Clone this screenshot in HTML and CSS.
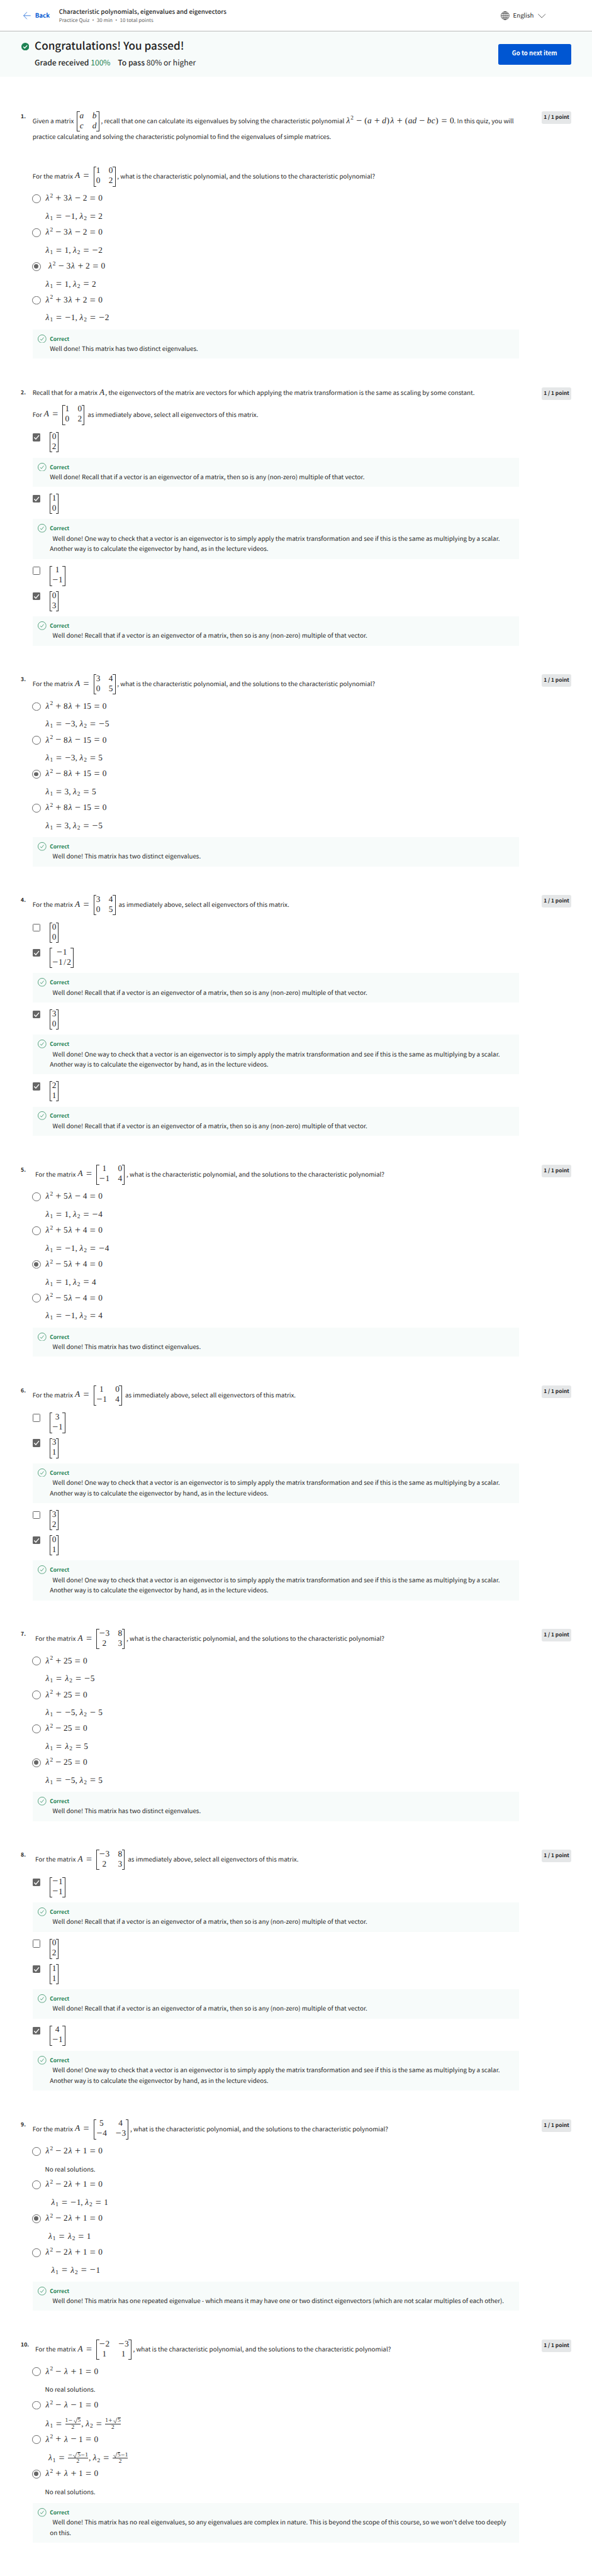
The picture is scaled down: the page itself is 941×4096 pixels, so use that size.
FILE: index.html
```
<!DOCTYPE html>
<html lang="en">
<head>
<meta charset="utf-8">
<title>Characteristic polynomials, eigenvalues and eigenvectors</title>
<link rel="stylesheet" href="styles.css">
</head>
<body>
<svg width="0" height="0" class="defs">
  <symbol id="ok" viewBox="0 0 20 20"><circle cx="10" cy="10" r="9.3" fill="none" stroke="#1f8354" stroke-width="1.1"/><path d="M5.8 10.4l2.7 2.9 5.3-6.6" fill="none" stroke="#1f8354" stroke-width="1.1"/></symbol>
  <symbol id="tick" viewBox="0 0 18 18"><path d="M3.4 9.4l3.8 4L14.6 4.6" fill="none" stroke="#fff" stroke-width="2"/></symbol>
  <symbol id="rad" viewBox="0 0 12 18"><path d="M1.2 10.4L3 9.2l3.6 7.6L11.8.6" fill="none" stroke="#1f1f1f" stroke-width="1.1"/></symbol>
</svg>

<header class="topbar">
  <a class="back"><svg class="arrow" viewBox="0 0 16 16"><path d="M8 .4L.8 8 8 15.6M.8 8H16" fill="none" stroke="#0056d2" stroke-width="1"/></svg><span>Back</span></a>
  <div class="heading">
    <div class="title">Characteristic polynomials, eigenvalues and eigenvectors</div>
    <div class="meta">Practice Quiz • 30 min • 10 total points</div>
  </div>
  <div class="lang">
    <svg class="globe" viewBox="0 0 20 20"><g fill="none" stroke="#333" stroke-width="1.1"><circle cx="10" cy="10" r="9.3"/><ellipse cx="10" cy="10" rx="4.6" ry="9.3"/><path d="M.7 10h18.6M10 .7v18.6M2.4 5.2h15.2M2.4 14.8h15.2"/></g></svg>
    <span>English</span>
    <svg class="chev" viewBox="0 0 18 10"><path d="M.6.6L9 9 17.4.6" fill="none" stroke="#333" stroke-width="1.1"/></svg>
  </div>
</header>

<section class="banner">
  <svg class="passed" viewBox="0 0 18 18"><circle cx="9" cy="9" r="9" fill="#1f8354"/><path d="M4.6 9.2l3 3 5.8-6" fill="none" stroke="#fff" stroke-width="2"/></svg>
  <div class="result">
    <h1>Congratulations! You passed!</h1>
    <div class="grade"><b>Grade received</b> <span class="pct">100%</span><b class="pass">To pass</b> 80% or higher</div>
  </div>
  <button class="next">Go to next item</button>
</section>

<main>

<section class="q">
  <div class="num">1.</div>
  <div class="body">
    <p class="mline">Given a matrix <span class="mx c2"><span><var>a</var></span><span><var>b</var></span><span><var>c</var></span><span><var>d</var></span></span>, recall that one can calculate its eigenvalues by solving the characteristic polynomial <span class="m"><i>λ</i><sup>2</sup><span class="op">−</span><span class="par">(</span><var>a</var><span class="op">+</span><var>d</var><span class="par">)</span><i>λ</i><span class="op">+</span><span class="par">(</span><var>ad</var><span class="op">−</span><var>bc</var><span class="par">)</span><span class="eq">=</span>0</span>. In this quiz, you will</p>
    <p class="line">practice calculating and solving the characteristic polynomial to find the eigenvalues of simple matrices.</p>
    <p class="mline again">For the matrix <span class="m"><i class="A">A</i><span class="eq">=</span></span><span class="mx c2"><span>1</span><span>0</span><span>0</span><span>2</span></span>, what is the characteristic polynomial, and the solutions to the characteristic polynomial?</p>
    <div class="opts">
      <div class="radio"><span class="dot"></span><div class="m"><div class="r1"><i>λ</i><sup>2</sup><span class="op">+</span>3<i>λ</i><span class="op">−</span>2<span class="eq">=</span>0</div><div class="r2"><i>λ</i><sub>1</sub><span class="eq">=</span><span class="neg">−</span>1<span class="cm">,</span><i>λ</i><sub>2</sub><span class="eq">=</span>2</div></div></div>
      <div class="radio"><span class="dot"></span><div class="m"><div class="r1"><i>λ</i><sup>2</sup><span class="op">−</span>3<i>λ</i><span class="op">−</span>2<span class="eq">=</span>0</div><div class="r2"><i>λ</i><sub>1</sub><span class="eq">=</span>1<span class="cm">,</span><i>λ</i><sub>2</sub><span class="eq">=</span><span class="neg">−</span>2</div></div></div>
      <div class="radio"><span class="dot on"></span><div class="m"><div class="r1 in"><i>λ</i><sup>2</sup><span class="op">−</span>3<i>λ</i><span class="op">+</span>2<span class="eq">=</span>0</div><div class="r2"><i>λ</i><sub>1</sub><span class="eq">=</span>1<span class="cm">,</span><i>λ</i><sub>2</sub><span class="eq">=</span>2</div></div></div>
      <div class="radio"><span class="dot"></span><div class="m"><div class="r1"><i>λ</i><sup>2</sup><span class="op">+</span>3<i>λ</i><span class="op">+</span>2<span class="eq">=</span>0</div><div class="r2"><i>λ</i><sub>1</sub><span class="eq">=</span><span class="neg">−</span>1<span class="cm">,</span><i>λ</i><sub>2</sub><span class="eq">=</span><span class="neg">−</span>2</div></div></div>
      <div class="fb"><svg><use href="#ok"/></svg><div><h4>Correct</h4><p>Well done! This matrix has two distinct eigenvalues.</p></div></div>
    </div>
  </div>
  <div class="pts">1 / 1 point</div>
</section>

<section class="q">
  <div class="num">2.</div>
  <div class="body">
    <p class="line first">Recall that for a matrix <span class="m"><i class="A">A</i></span>, the eigenvectors of the matrix are vectors for which applying the matrix transformation is the same as scaling by some constant.</p>
    <p class="mline second">For <span class="m"><i class="A">A</i><span class="eq">=</span></span><span class="mx c2"><span>1</span><span>0</span><span>0</span><span>2</span></span> as immediately above, select all eigenvectors of this matrix.</p>
    <div class="opts">
      <div class="check"><span class="box on"><svg><use href="#tick"/></svg></span><span class="mx"><span>0</span><span>2</span></span></div>
      <div class="fb"><svg><use href="#ok"/></svg><div><h4>Correct</h4><p>Well done! Recall that if a vector is an eigenvector of a matrix, then so is any (non-zero) multiple of that vector.</p></div></div>
      <div class="check"><span class="box on"><svg><use href="#tick"/></svg></span><span class="mx"><span>1</span><span>0</span></span></div>
      <div class="fb"><svg><use href="#ok"/></svg><div><h4>Correct</h4><p class="in">Well done! One way to check that a vector is an eigenvector is to simply apply the matrix transformation and see if this is the same as multiplying by a scalar.<br>Another way is to calculate the eigenvector by hand, as in the lecture videos.</p></div></div>
      <div class="check"><span class="box"></span><span class="mx"><span>1</span><span><span class="neg">−</span>1</span></span></div>
      <div class="check"><span class="box on"><svg><use href="#tick"/></svg></span><span class="mx"><span>0</span><span>3</span></span></div>
      <div class="fb"><svg><use href="#ok"/></svg><div><h4>Correct</h4><p class="in">Well done! Recall that if a vector is an eigenvector of a matrix, then so is any (non-zero) multiple of that vector.</p></div></div>
    </div>
  </div>
  <div class="pts">1 / 1 point</div>
</section>

<section class="q">
  <div class="num">3.</div>
  <div class="body">
    <p class="mline">For the matrix <span class="m"><i class="A">A</i><span class="eq">=</span></span><span class="mx c2"><span>3</span><span>4</span><span>0</span><span>5</span></span>, what is the characteristic polynomial, and the solutions to the characteristic polynomial?</p>
    <div class="opts">
      <div class="radio"><span class="dot"></span><div class="m"><div class="r1"><i>λ</i><sup>2</sup><span class="op">+</span>8<i>λ</i><span class="op">+</span>15<span class="eq">=</span>0</div><div class="r2"><i>λ</i><sub>1</sub><span class="eq">=</span><span class="neg">−</span>3<span class="cm">,</span><i>λ</i><sub>2</sub><span class="eq">=</span><span class="neg">−</span>5</div></div></div>
      <div class="radio"><span class="dot"></span><div class="m"><div class="r1"><i>λ</i><sup>2</sup><span class="op">−</span>8<i>λ</i><span class="op">−</span>15<span class="eq">=</span>0</div><div class="r2"><i>λ</i><sub>1</sub><span class="eq">=</span><span class="neg">−</span>3<span class="cm">,</span><i>λ</i><sub>2</sub><span class="eq">=</span>5</div></div></div>
      <div class="radio"><span class="dot on"></span><div class="m"><div class="r1"><i>λ</i><sup>2</sup><span class="op">−</span>8<i>λ</i><span class="op">+</span>15<span class="eq">=</span>0</div><div class="r2"><i>λ</i><sub>1</sub><span class="eq">=</span>3<span class="cm">,</span><i>λ</i><sub>2</sub><span class="eq">=</span>5</div></div></div>
      <div class="radio"><span class="dot"></span><div class="m"><div class="r1"><i>λ</i><sup>2</sup><span class="op">+</span>8<i>λ</i><span class="op">−</span>15<span class="eq">=</span>0</div><div class="r2"><i>λ</i><sub>1</sub><span class="eq">=</span>3<span class="cm">,</span><i>λ</i><sub>2</sub><span class="eq">=</span><span class="neg">−</span>5</div></div></div>
      <div class="fb"><svg><use href="#ok"/></svg><div><h4>Correct</h4><p class="in">Well done! This matrix has two distinct eigenvalues.</p></div></div>
    </div>
  </div>
  <div class="pts">1 / 1 point</div>
</section>

<section class="q">
  <div class="num">4.</div>
  <div class="body">
    <p class="mline">For the matrix <span class="m"><i class="A">A</i><span class="eq">=</span></span><span class="mx c2"><span>3</span><span>4</span><span>0</span><span>5</span></span> as immediately above, select all eigenvectors of this matrix.</p>
    <div class="opts">
      <div class="check"><span class="box"></span><span class="mx"><span>0</span><span>0</span></span></div>
      <div class="check"><span class="box on"><svg><use href="#tick"/></svg></span><span class="mx"><span><span class="neg">−</span>1</span><span><span class="neg">−</span>1<span class="sl">/</span>2</span></span></div>
      <div class="fb"><svg><use href="#ok"/></svg><div><h4>Correct</h4><p class="in">Well done! Recall that if a vector is an eigenvector of a matrix, then so is any (non-zero) multiple of that vector.</p></div></div>
      <div class="check"><span class="box on"><svg><use href="#tick"/></svg></span><span class="mx"><span>3</span><span>0</span></span></div>
      <div class="fb"><svg><use href="#ok"/></svg><div><h4>Correct</h4><p class="in">Well done! One way to check that a vector is an eigenvector is to simply apply the matrix transformation and see if this is the same as multiplying by a scalar.<br>Another way is to calculate the eigenvector by hand, as in the lecture videos.</p></div></div>
      <div class="check"><span class="box on"><svg><use href="#tick"/></svg></span><span class="mx"><span>2</span><span>1</span></span></div>
      <div class="fb"><svg><use href="#ok"/></svg><div><h4>Correct</h4><p class="in">Well done! Recall that if a vector is an eigenvector of a matrix, then so is any (non-zero) multiple of that vector.</p></div></div>
    </div>
  </div>
  <div class="pts">1 / 1 point</div>
</section>

<section class="q">
  <div class="num">5.</div>
  <div class="body">
    <p class="mline in">For the matrix <span class="m"><i class="A">A</i><span class="eq">=</span></span><span class="mx c2"><span>1</span><span>0</span><span><span class="neg">−</span>1</span><span>4</span></span>, what is the characteristic polynomial, and the solutions to the characteristic polynomial?</p>
    <div class="opts">
      <div class="radio"><span class="dot"></span><div class="m"><div class="r1"><i>λ</i><sup>2</sup><span class="op">+</span>5<i>λ</i><span class="op">−</span>4<span class="eq">=</span>0</div><div class="r2"><i>λ</i><sub>1</sub><span class="eq">=</span>1<span class="cm">,</span><i>λ</i><sub>2</sub><span class="eq">=</span><span class="neg">−</span>4</div></div></div>
      <div class="radio"><span class="dot"></span><div class="m"><div class="r1"><i>λ</i><sup>2</sup><span class="op">+</span>5<i>λ</i><span class="op">+</span>4<span class="eq">=</span>0</div><div class="r2"><i>λ</i><sub>1</sub><span class="eq">=</span><span class="neg">−</span>1<span class="cm">,</span><i>λ</i><sub>2</sub><span class="eq">=</span><span class="neg">−</span>4</div></div></div>
      <div class="radio"><span class="dot on"></span><div class="m"><div class="r1"><i>λ</i><sup>2</sup><span class="op">−</span>5<i>λ</i><span class="op">+</span>4<span class="eq">=</span>0</div><div class="r2"><i>λ</i><sub>1</sub><span class="eq">=</span>1<span class="cm">,</span><i>λ</i><sub>2</sub><span class="eq">=</span>4</div></div></div>
      <div class="radio"><span class="dot"></span><div class="m"><div class="r1"><i>λ</i><sup>2</sup><span class="op">−</span>5<i>λ</i><span class="op">−</span>4<span class="eq">=</span>0</div><div class="r2"><i>λ</i><sub>1</sub><span class="eq">=</span><span class="neg">−</span>1<span class="cm">,</span><i>λ</i><sub>2</sub><span class="eq">=</span>4</div></div></div>
      <div class="fb"><svg><use href="#ok"/></svg><div><h4>Correct</h4><p class="in">Well done! This matrix has two distinct eigenvalues.</p></div></div>
    </div>
  </div>
  <div class="pts">1 / 1 point</div>
</section>

<section class="q">
  <div class="num">6.</div>
  <div class="body">
    <p class="mline">For the matrix <span class="m"><i class="A">A</i><span class="eq">=</span></span><span class="mx c2"><span>1</span><span>0</span><span><span class="neg">−</span>1</span><span>4</span></span> as immediately above, select all eigenvectors of this matrix.</p>
    <div class="opts">
      <div class="check"><span class="box"></span><span class="mx"><span>3</span><span><span class="neg">−</span>1</span></span></div>
      <div class="check"><span class="box on"><svg><use href="#tick"/></svg></span><span class="mx"><span>3</span><span>1</span></span></div>
      <div class="fb"><svg><use href="#ok"/></svg><div><h4>Correct</h4><p class="in">Well done! One way to check that a vector is an eigenvector is to simply apply the matrix transformation and see if this is the same as multiplying by a scalar.<br>Another way is to calculate the eigenvector by hand, as in the lecture videos.</p></div></div>
      <div class="check"><span class="box"></span><span class="mx"><span>3</span><span>2</span></span></div>
      <div class="check"><span class="box on"><svg><use href="#tick"/></svg></span><span class="mx"><span>0</span><span>1</span></span></div>
      <div class="fb"><svg><use href="#ok"/></svg><div><h4>Correct</h4><p class="in">Well done! One way to check that a vector is an eigenvector is to simply apply the matrix transformation and see if this is the same as multiplying by a scalar.<br>Another way is to calculate the eigenvector by hand, as in the lecture videos.</p></div></div>
    </div>
  </div>
  <div class="pts">1 / 1 point</div>
</section>

<section class="q">
  <div class="num">7.</div>
  <div class="body">
    <p class="mline in">For the matrix <span class="m"><i class="A">A</i><span class="eq">=</span></span><span class="mx c2"><span><span class="neg">−</span>3</span><span>8</span><span>2</span><span>3</span></span>, what is the characteristic polynomial, and the solutions to the characteristic polynomial?</p>
    <div class="opts">
      <div class="radio"><span class="dot"></span><div class="m"><div class="r1"><i>λ</i><sup>2</sup><span class="op">+</span>25<span class="eq">=</span>0</div><div class="r2"><i>λ</i><sub>1</sub><span class="eq">=</span><i>λ</i><sub>2</sub><span class="eq">=</span><span class="neg">−</span>5</div></div></div>
      <div class="radio"><span class="dot"></span><div class="m"><div class="r1"><i>λ</i><sup>2</sup><span class="op">+</span>25<span class="eq">=</span>0</div><div class="r2"><i>λ</i><sub>1</sub><span class="eq">−</span><span class="neg">−</span>5<span class="cm">,</span><i>λ</i><sub>2</sub><span class="eq">−</span>5</div></div></div>
      <div class="radio"><span class="dot"></span><div class="m"><div class="r1"><i>λ</i><sup>2</sup><span class="op">−</span>25<span class="eq">=</span>0</div><div class="r2"><i>λ</i><sub>1</sub><span class="eq">=</span><i>λ</i><sub>2</sub><span class="eq">=</span>5</div></div></div>
      <div class="radio"><span class="dot on"></span><div class="m"><div class="r1"><i>λ</i><sup>2</sup><span class="op">−</span>25<span class="eq">=</span>0</div><div class="r2"><i>λ</i><sub>1</sub><span class="eq">=</span><span class="neg">−</span>5<span class="cm">,</span><i>λ</i><sub>2</sub><span class="eq">=</span>5</div></div></div>
      <div class="fb"><svg><use href="#ok"/></svg><div><h4>Correct</h4><p class="in">Well done! This matrix has two distinct eigenvalues.</p></div></div>
    </div>
  </div>
  <div class="pts">1 / 1 point</div>
</section>

<section class="q">
  <div class="num">8.</div>
  <div class="body">
    <p class="mline in">For the matrix <span class="m"><i class="A">A</i><span class="eq">=</span></span><span class="mx c2"><span><span class="neg">−</span>3</span><span>8</span><span>2</span><span>3</span></span> as immediately above, select all eigenvectors of this matrix.</p>
    <div class="opts">
      <div class="check"><span class="box on"><svg><use href="#tick"/></svg></span><span class="mx"><span><span class="neg">−</span>1</span><span><span class="neg">−</span>1</span></span></div>
      <div class="fb"><svg><use href="#ok"/></svg><div><h4>Correct</h4><p class="in">Well done! Recall that if a vector is an eigenvector of a matrix, then so is any (non-zero) multiple of that vector.</p></div></div>
      <div class="check"><span class="box"></span><span class="mx"><span>0</span><span>2</span></span></div>
      <div class="check"><span class="box on"><svg><use href="#tick"/></svg></span><span class="mx"><span>1</span><span>1</span></span></div>
      <div class="fb"><svg><use href="#ok"/></svg><div><h4>Correct</h4><p class="in">Well done! Recall that if a vector is an eigenvector of a matrix, then so is any (non-zero) multiple of that vector.</p></div></div>
      <div class="check"><span class="box on"><svg><use href="#tick"/></svg></span><span class="mx"><span>4</span><span><span class="neg">−</span>1</span></span></div>
      <div class="fb"><svg><use href="#ok"/></svg><div><h4>Correct</h4><p class="in">Well done! One way to check that a vector is an eigenvector is to simply apply the matrix transformation and see if this is the same as multiplying by a scalar.<br>Another way is to calculate the eigenvector by hand, as in the lecture videos.</p></div></div>
    </div>
  </div>
  <div class="pts">1 / 1 point</div>
</section>

<section class="q">
  <div class="num">9.</div>
  <div class="body">
    <p class="mline">For the matrix <span class="m"><i class="A">A</i><span class="eq">=</span></span><span class="mx c2"><span>5</span><span>4</span><span><span class="neg">−</span>4</span><span><span class="neg">−</span>3</span></span>, what is the characteristic polynomial, and the solutions to the characteristic polynomial?</p>
    <div class="opts">
      <div class="radio short"><span class="dot"></span><div class="m"><div class="r1"><i>λ</i><sup>2</sup><span class="op">−</span>2<i>λ</i><span class="op">+</span>1<span class="eq">=</span>0</div><div class="r2 txt">No real solutions.</div></div></div>
      <div class="radio"><span class="dot"></span><div class="m"><div class="r1"><i>λ</i><sup>2</sup><span class="op">−</span>2<i>λ</i><span class="op">+</span>1<span class="eq">=</span>0</div><div class="r2 in2"><i>λ</i><sub>1</sub><span class="eq">=</span><span class="neg">−</span>1<span class="cm">,</span><i>λ</i><sub>2</sub><span class="eq">=</span>1</div></div></div>
      <div class="radio"><span class="dot on"></span><div class="m"><div class="r1"><i>λ</i><sup>2</sup><span class="op">−</span>2<i>λ</i><span class="op">+</span>1<span class="eq">=</span>0</div><div class="r2 in"><i>λ</i><sub>1</sub><span class="eq">=</span><i>λ</i><sub>2</sub><span class="eq">=</span>1</div></div></div>
      <div class="radio"><span class="dot"></span><div class="m"><div class="r1"><i>λ</i><sup>2</sup><span class="op">−</span>2<i>λ</i><span class="op">+</span>1<span class="eq">=</span>0</div><div class="r2 in2"><i>λ</i><sub>1</sub><span class="eq">=</span><i>λ</i><sub>2</sub><span class="eq">=</span><span class="neg">−</span>1</div></div></div>
      <div class="fb"><svg><use href="#ok"/></svg><div><h4>Correct</h4><p class="in">Well done! This matrix has one repeated eigenvalue - which means it may have one or two distinct eigenvectors (which are not scalar multiples of each other).</p></div></div>
    </div>
  </div>
  <div class="pts">1 / 1 point</div>
</section>

<section class="q">
  <div class="num">10.</div>
  <div class="body">
    <p class="mline in">For the matrix <span class="m"><i class="A">A</i><span class="eq">=</span></span><span class="mx c2"><span><span class="neg">−</span>2</span><span><span class="neg">−</span>3</span><span>1</span><span>1</span></span>, what is the characteristic polynomial, and the solutions to the characteristic polynomial?</p>
    <div class="opts">
      <div class="radio short"><span class="dot"></span><div class="m"><div class="r1"><i>λ</i><sup>2</sup><span class="op">−</span><i>λ</i><span class="op">+</span>1<span class="eq">=</span>0</div><div class="r2 txt">No real solutions.</div></div></div>
      <div class="radio tall"><span class="dot"></span><div class="m"><div class="r1"><i>λ</i><sup>2</sup><span class="op">−</span><i>λ</i><span class="op">−</span>1<span class="eq">=</span>0</div><div class="r2"><i>λ</i><sub>1</sub><span class="eq">=</span><span class="frac"><span class="nu">1<span class="neg">−</span><svg><use href="#rad"/></svg><span class="rt">5</span></span><span>2</span></span><span class="cm">,</span><i>λ</i><sub>2</sub><span class="eq">=</span><span class="frac"><span class="nu">1<span class="neg">+</span><svg><use href="#rad"/></svg><span class="rt">5</span></span><span>2</span></span></div></div></div>
      <div class="radio tall"><span class="dot"></span><div class="m"><div class="r1"><i>λ</i><sup>2</sup><span class="op">+</span><i>λ</i><span class="op">−</span>1<span class="eq">=</span>0</div><div class="r2 in"><i>λ</i><sub>1</sub><span class="eq">=</span><span class="frac"><span class="nu"><span class="neg">−</span><svg><use href="#rad"/></svg><span class="rt">5</span><span class="neg">−</span>1</span><span>2</span></span><span class="cm">,</span><i>λ</i><sub>2</sub><span class="eq">=</span><span class="frac"><span class="nu"><svg><use href="#rad"/></svg><span class="rt">5</span><span class="neg">−</span>1</span><span>2</span></span></div></div></div>
      <div class="radio"><span class="dot on"></span><div class="m"><div class="r1"><i>λ</i><sup>2</sup><span class="op">+</span><i>λ</i><span class="op">+</span>1<span class="eq">=</span>0</div><div class="r2 txt">No real solutions.</div></div></div>
      <div class="fb"><svg><use href="#ok"/></svg><div><h4>Correct</h4><p class="in">Well done! This matrix has no real eigenvalues, so any eigenvalues are complex in nature. This is beyond the scope of this course, so we won't delve too deeply<br>on this.</p></div></div>
    </div>
  </div>
  <div class="pts">1 / 1 point</div>
</section>

</main>
</body>
</html>
```
FILE: styles.css
```
/* 1rem is ten design units */
html { font-size: 6.8887px; }
* { box-sizing: border-box; }
body {
  margin: 0;
  background: #fff;
  color: #1f1f1f;
  font: 400 1.43rem/2.4rem "Noto Sans CJK SC", "Noto Sans", sans-serif;
  min-height: 594.5rem;
  text-rendering: geometricPrecision;
}
p, h1, h4 { margin: 0; }
svg { display: block; flex: none; }
.defs { position: absolute; }

/* top bar */
.topbar {
  display: flex;
  height: 7.3rem;
  border-bottom: 1px solid #bbb;
  padding-left: 5.4rem;
}
.back { flex: none; display: flex; align-items: flex-start; width: 8.2rem; color: #0056d2; font-weight: 700; font-size: 1.41rem; }
.arrow { width: 1.7rem; height: 1.7rem; margin: 2.75rem 1rem 0 0; }
.back span { margin-top: 2.37rem; }
.heading { flex: 1; padding-top: 1.4rem; }
.title { font-size: 1.417rem; font-weight: 500; line-height: 2.4rem; }
.meta { font-size: 1.162rem; line-height: 2rem; color: #636363; }
.lang { display: flex; align-items: flex-start; width: 21rem; font-size: 1.4rem; }
.lang span { margin: 2.3rem 1rem 0 .8rem; }
.globe { width: 2rem; height: 2rem; margin-top: 2.6rem; }
.chev { width: 1.8rem; height: 1rem; margin-top: 3.2rem; }

/* result banner */
.banner {
  display: flex;
  height: 10.4rem;
  padding-left: 4.9rem;
  background: #f7fbfa;
}
.passed { width: 1.8rem; height: 1.8rem; margin: 2.5rem 1.3rem 0 0; }
.result { flex: 1; padding-top: 1.55rem; }
h1 { font-size: 2.483rem; font-weight: 500; line-height: 3.2rem; }
.grade { font-size: 1.763rem; line-height: 2.4rem; margin-top: 1.3rem; }
.grade b { font-weight: 500; }
.pct { color: #1f8354; }
.pass { margin-left: 1.7rem; }
.next {
  width: 16.9rem;
  height: 4.8rem;
  margin: 2.8rem 4.8rem 0 0;
  padding: 0 0 .3rem;
  border: 0;
  border-radius: .4rem;
  background: #0056d2;
  color: #fff;
  font: 700 1.4rem/2rem "Noto Sans CJK SC", "Noto Sans", sans-serif;
}

/* questions */
main { padding-top: 8rem; }
.q { display: flex; align-items: flex-start; padding: 0 4.8rem 6.61rem; }
.q:last-child { padding-bottom: 0; }
.num { width: 2.7rem; flex: none; font-weight: 700; font-size: 1.25rem; white-space: nowrap; }
.body { width: 112.2rem; }
.pts {
  width: 6.8rem;
  height: 2.9rem;
  margin-left: 5.3rem;
  border-radius: .4rem;
  background: #e5e7e8;
  font-size: 1.21rem;
  font-weight: 700;
  line-height: 2.8rem;
  text-align: center;
  white-space: nowrap;
}
.mline { height: 4.65rem; line-height: 1; white-space: nowrap; }
.line { height: 2.4rem; white-space: nowrap; }
.mline.again { margin-top: 5.68rem; }
.second { margin-top: 1.65rem; }
.first { line-height: 2.35rem; }
.in { text-indent: .64rem; }
.in2 { text-indent: 1.28rem; }
.mline + .opts { padding-top: 1.7rem; }

/* formulas */
.m, .mx { font-family: "Liberation Serif", serif; font-size: 1.936rem; line-height: 1; text-indent: 0; }
.m i, .m var, .mx var { display: inline-block; text-indent: 0; font-style: italic; }
.m i { width: .583em; text-align: center; }
.m .A { width: .75em; }
.m var, .mx var { letter-spacing: .02em; }
.m sup, .m sub { font-size: .7em; line-height: 0; display: inline-block; width: .571em; text-indent: 0; }
.m sup { vertical-align: .58em; }
.m sub { vertical-align: -.22em; }
.op, .eq, .neg, .par, .sl, .cm { display: inline-block; text-align: center; text-indent: 0; }
.op, .eq, .neg { font-size: 1.2em; line-height: 0; vertical-align: -.05em; }
.op { width: 1.018em; }
.eq { width: 1.112em; }
.neg { width: .648em; }
.par { width: .389em; }
.sl { width: .5em; }
.cm { width: .445em; text-align: left; }
.mx {
  position: relative;
  display: inline-grid;
  grid-template-rows: 1.85rem 2.8rem;
  column-gap: 1em;
  align-items: center;
  justify-items: center;
  height: 4.65rem;
  margin: 0 .4rem;
  padding: 0 .6rem;
  vertical-align: middle;
}
.c2 { grid-template-columns: auto auto; }
.mx::before, .mx::after {
  content: "";
  position: absolute;
  top: 0;
  bottom: 0;
  width: .55rem;
  border: 1px solid #333;
}
.mx::before { left: 0; border-right: 0; }
.mx::after { right: 0; border-left: 0; }
.frac { display: inline-flex; flex-direction: column; align-items: center; font-size: .7em; line-height: 1.5rem; margin: 0 .12em; vertical-align: middle; text-indent: 0; }
.nu { display: flex; align-items: center; height: 1.5rem; border-bottom: 1px solid #333; }
.nu svg { width: .853em; height: 1.4rem; }
.rt { height: 1.4rem; line-height: 1.4rem; border-top: 1px solid #333; }

/* answers */
.radio { display: flex; height: 7.81rem; }
.short { height: 7.72rem; }
.tall { height: 7.93rem; }
.dot { flex: none; width: 2rem; height: 2rem; margin: .1rem 1rem 0 -.1rem; border: .2rem solid #666; border-radius: 50%; display: flex; align-items: center; justify-content: center; }
.dot.on::after { content: ""; width: 1rem; height: 1rem; border-radius: 50%; background: #666; }
.r1 { height: 2.1rem; line-height: 2.1rem; }
.r2 { height: 2.4rem; line-height: 2.4rem; margin-top: 1.9rem; }
.radio .txt { font: 400 1.43rem/2.4rem "Noto Sans CJK SC", "Noto Sans", sans-serif; }
.check { display: flex; align-items: flex-start; height: 5.83rem; }
.box { flex: none; width: 1.8rem; height: 1.8rem; margin: .26rem 1.7rem 0 0; border: .2rem solid #666; border-radius: .2rem; }
.box.on { border: 0; background: #666; }
.box svg { width: 1.8rem; height: 1.8rem; }

/* feedback */
.fb { display: flex; padding: 1.15rem 0 1.12rem 1.2rem; background: #f7fbfa; }
.fb + .check { margin-top: 1.61rem; }
.fb svg { width: 2rem; height: 2rem; margin-right: .8rem; }
.fb h4 { color: #1f8354; font-size: 1.23rem; line-height: 2.1rem; font-weight: 700; }
.fb p { white-space: nowrap; }
```
